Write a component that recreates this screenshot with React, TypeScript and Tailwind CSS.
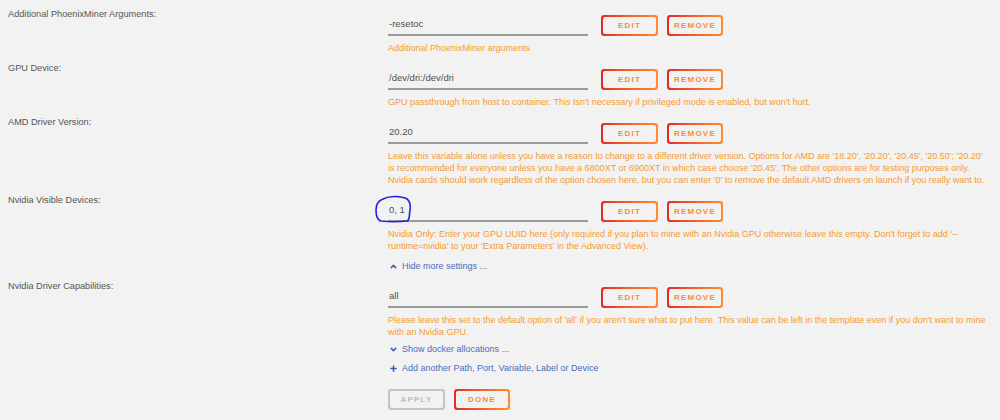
import React from 'react';
import { ChevronUp, ChevronDown, Plus } from 'lucide-react';

const font = { fontFamily: '"Liberation Sans", Arial, sans-serif' };

const GradientButton: React.FC<{ label: string; width: string; disabled?: boolean }> = ({ label, width, disabled }) => (
    <div
        className={`${width} h-[21px] rounded-[3px] p-[2px] ${disabled ? 'bg-[#c4c4c4]' : 'bg-gradient-to-r from-[#e22828] to-[#ff8c2f]'}`}
    >
        <div className="w-full h-full rounded-[2px] bg-[#f2f2f2] flex items-center justify-center">
            <span
                className={`text-[8px] font-bold tracking-[1.2px] leading-none ${disabled ? 'text-[#bdbdbd]' : 'text-[#fb8a36]'}`}
            >
                {label}
            </span>
        </div>
    </div>
);

type Setting = {
    label: string;
    value: string;
    help: string[];
    circled?: boolean;
    footer?: React.ReactNode;
};

const LinkLine: React.FC<{ icon: React.ElementType; text: string; className?: string }> = ({ icon: Icon, text, className }) => (
    <div className={`flex items-center gap-[4px] text-[9px] leading-[12px] text-[#4a6cc0] pl-[1px] ${className ?? ''}`}>
        <Icon size={9} strokeWidth={4} className="text-[#3a5db0]" />
        <span>{text}</span>
    </div>
);

const SETTINGS: Setting[] = [
    {
        label: 'Additional PhoenixMiner Arguments:',
        value: '-resetoc',
        help: ['Additional PhoenixMiner arguments'],
    },
    {
        label: 'GPU Device:',
        value: '/dev/dri:/dev/dri',
        help: ["GPU passthrough from host to container. This Isn't necessary if privileged mode is enabled, but won't hurt."],
    },
    {
        label: 'AMD Driver Version:',
        value: '20.20',
        help: [
            "Leave this variable alone unless you have a reason to change to a different driver version. Options for AMD are '18.20', '20.20', '20.45', '20.50'; '20.20'",
            "is recommended for everyone unless you have a 6800XT or 6900XT in which case choose '20.45'. The other options are for testing purposes only.",
            "Nvidia cards should work regardless of the option chosen here, but you can enter '0' to remove the default AMD drivers on launch if you really want to.",
        ],
    },
    {
        label: 'Nvidia Visible Devices:',
        value: '0, 1',
        circled: true,
        help: [
            "Nvidia Only: Enter your GPU UUID here (only required if you plan to mine with an Nvidia GPU otherwise leave this empty. Don't forget to add '--",
            "runtime=nvidia' to your 'Extra Parameters' in the Advanced View).",
        ],
        footer: <LinkLine icon={ChevronUp} text="Hide more settings ..." className="mt-[8px]" />,
    },
    {
        label: 'Nvidia Driver Capabilities:',
        value: 'all',
        help: [
            "Please leave this set to the default option of 'all' if you aren't sure what to put here. This value can be left in the template even if you don't want to mine",
            'with an Nvidia GPU.',
        ],
    },
];

const SettingRow: React.FC<{ setting: Setting; last?: boolean }> = ({ setting, last }) => (
    <div className={`flex ${last ? 'pb-[5px]' : 'pb-[7px]'}`}>
        <div className="w-[388px] pl-[8px] text-[9.2px] leading-[14px] text-[#555555]">{setting.label}</div>
        <div className="pt-[8px]">
            <div className="flex items-center h-[21px]">
                <div className="relative w-[200px] h-[21px] border-b-2 border-[#9b9b9b] flex items-center pl-[1px] text-[9.5px] text-[#505050]">
                    {setting.value}
                    {setting.circled && (
                        <svg className="absolute left-[-13px] top-[-6px]" width="38" height="28" viewBox="0 0 38 28" fill="none">
                            <path
                                d="M8 4 C14 1 22 1 30 3 C34 4 36 9 35 15 C34 21 35 25 32 26 C24 27 14 27 6 26 C2 25 1 20 1 15 C1 10 3 6 8 4 Z"
                                stroke="#1f1fe6"
                                strokeWidth="1.6"
                                strokeLinecap="round"
                            />
                        </svg>
                    )}
                </div>
                <div className="ml-[13px] flex gap-[9px]">
                    <GradientButton label="EDIT" width="w-[57px]" />
                    <GradientButton label="REMOVE" width="w-[56px]" />
                </div>
            </div>
            <div className="mt-[6px] text-[9px] leading-[12px] text-[#f29c30] whitespace-nowrap">
                {setting.help.map((line, i) => (
                    <div key={i}>{line}</div>
                ))}
            </div>
            {setting.footer}
        </div>
    </div>
);

export default function App() {
    return (
        <div className="w-[1000px] h-[420px] bg-[#f2f2f2] pt-[7px] overflow-hidden" style={font}>
            {SETTINGS.map((s, i) => (
                <SettingRow key={s.label} setting={s} last={i === SETTINGS.length - 1} />
            ))}
            <div className="pl-[388px]">
                <LinkLine icon={ChevronDown} text="Show docker allocations ..." />
                <LinkLine icon={Plus} text="Add another Path, Port, Variable, Label or Device" className="mt-[7px]" />
                <div className="flex gap-[9px] mt-[15px]">
                    <GradientButton label="APPLY" width="w-[57px]" disabled />
                    <GradientButton label="DONE" width="w-[56px]" />
                </div>
            </div>
        </div>
    );
}
